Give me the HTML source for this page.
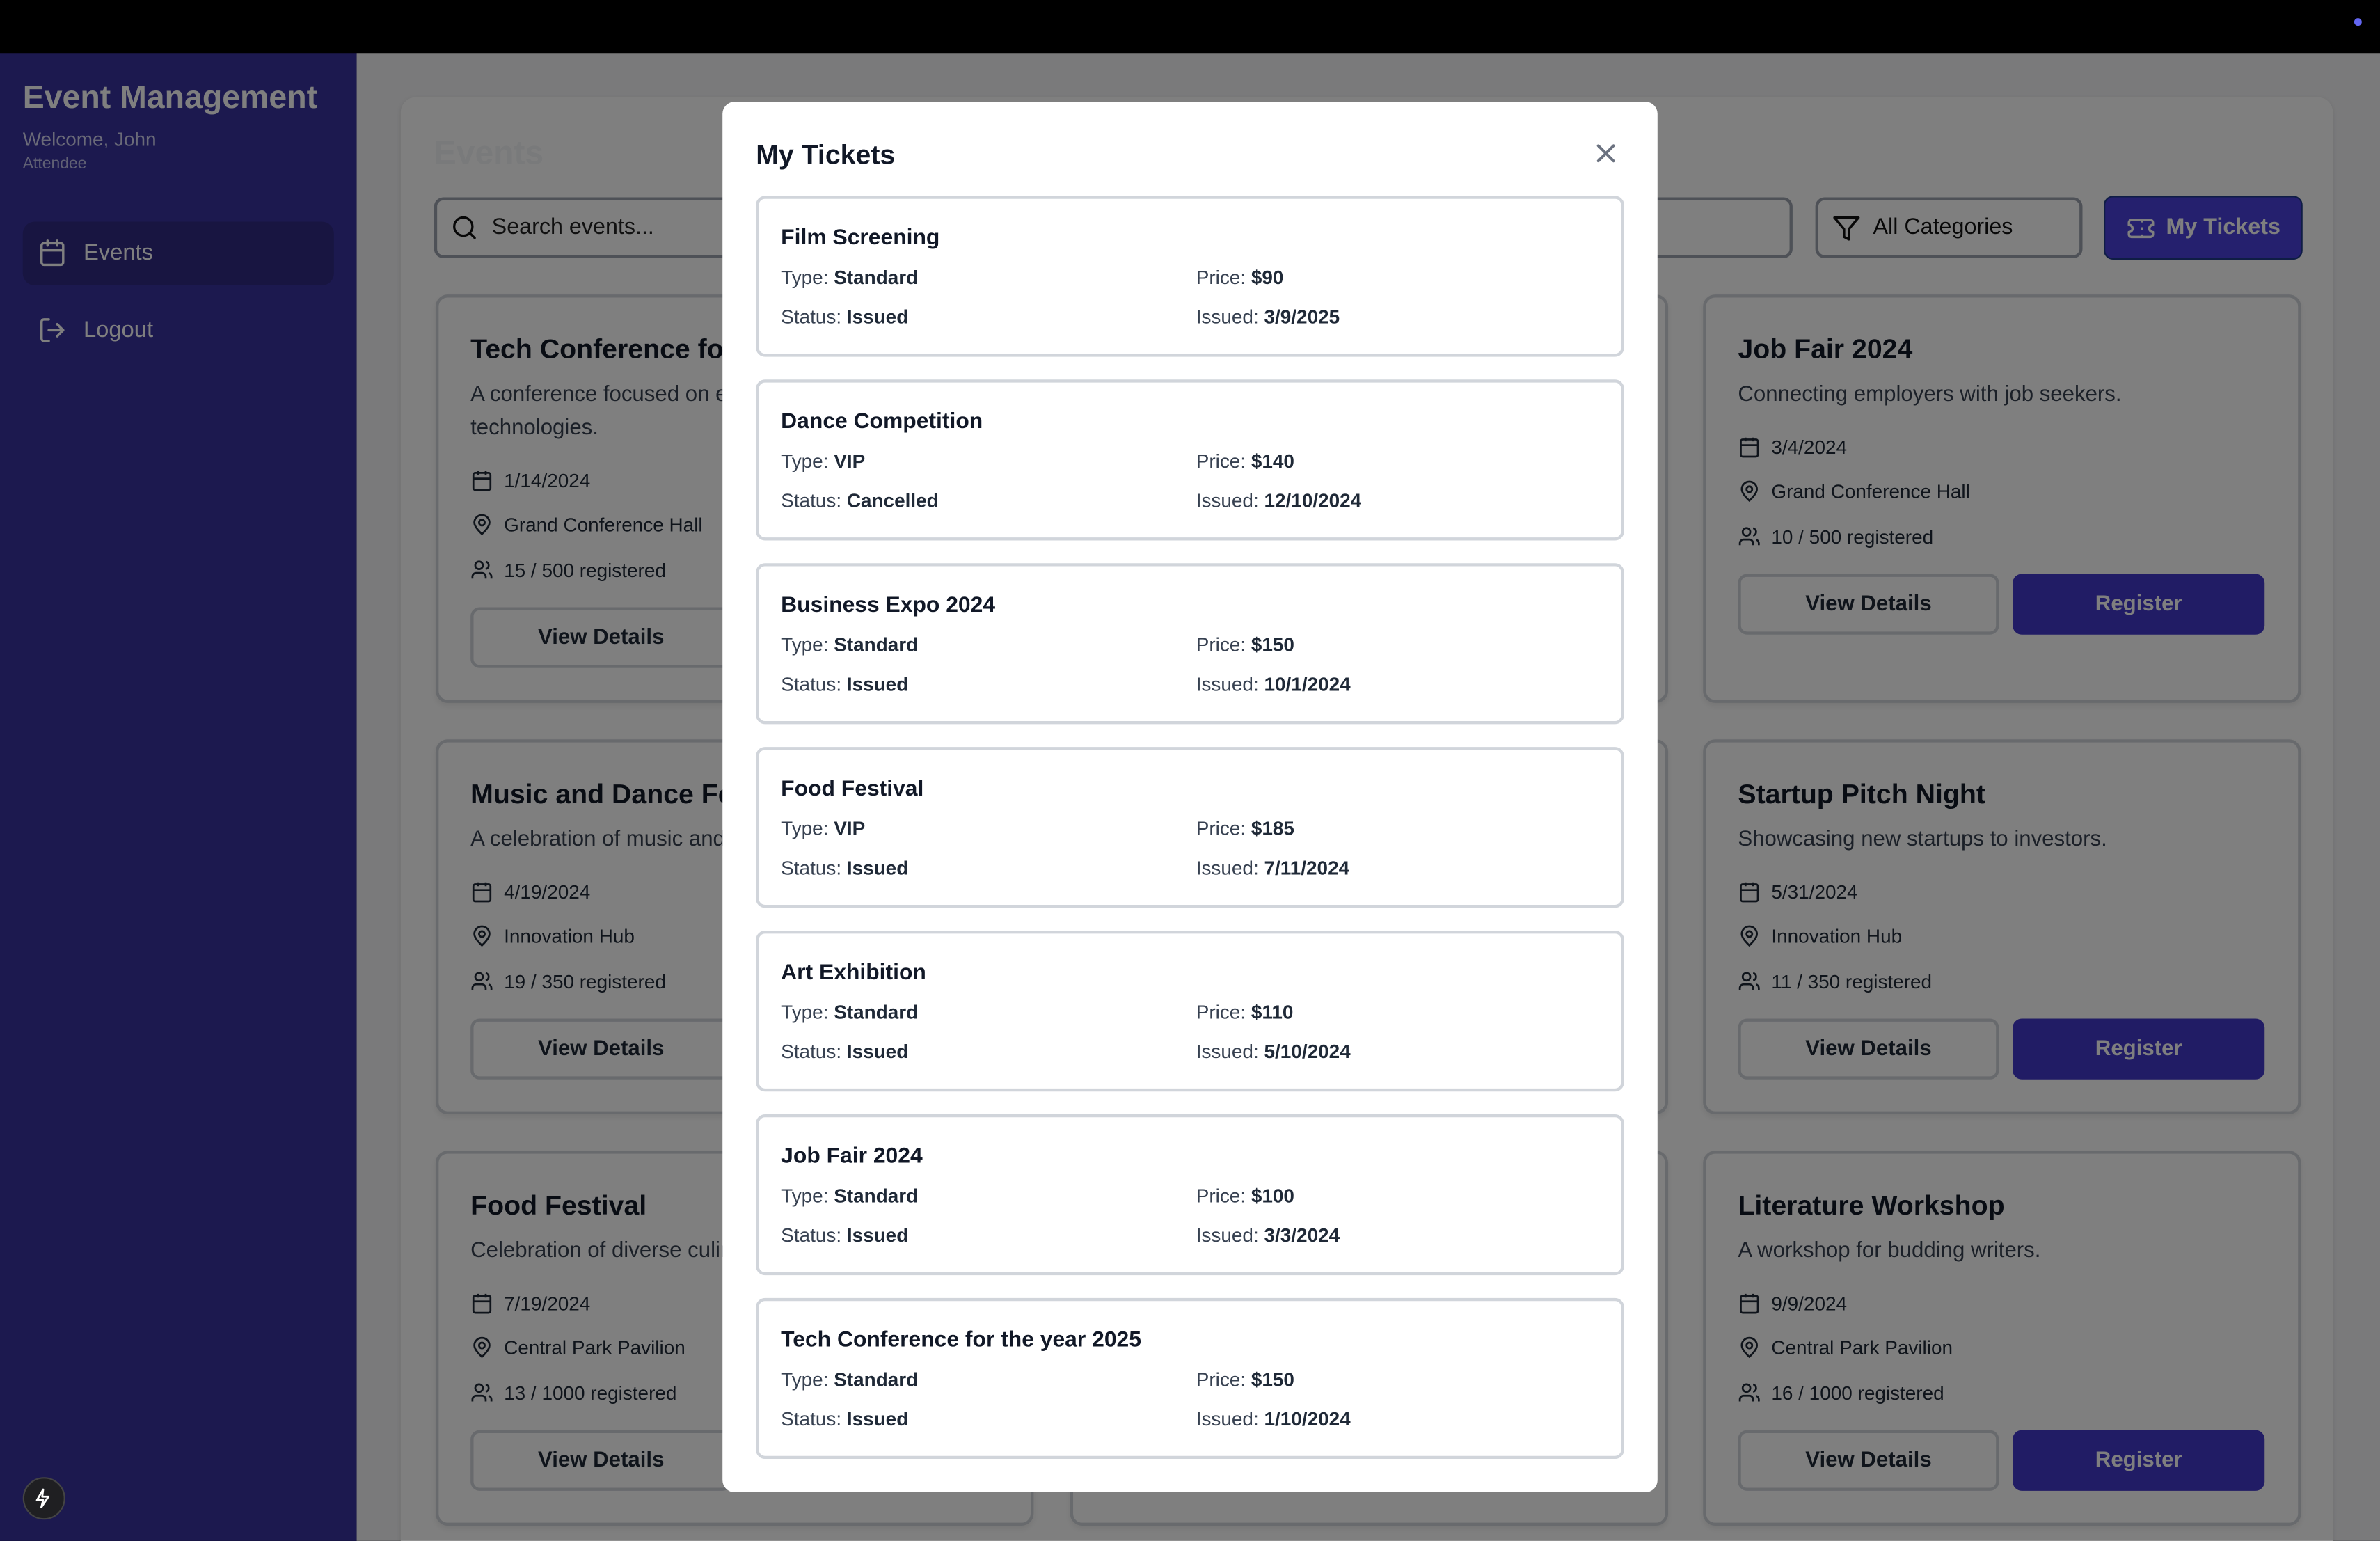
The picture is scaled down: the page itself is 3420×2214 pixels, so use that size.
<!DOCTYPE html>
<html><head><meta charset="utf-8"><style>
*{box-sizing:border-box;margin:0;padding:0}
html,body{width:3420px;height:2214px;overflow:hidden;background:#000;font-family:"Liberation Sans",sans-serif}
#s{position:absolute;left:0;top:0;width:1568px;height:1015px;transform:scale(2.18112);transform-origin:0 0;overflow:hidden}
.top{position:absolute;left:0;top:0;width:1568px;height:35.3px;background:#000}
.dot{position:absolute;left:1550.7px;top:11.8px;width:5.6px;height:5.6px;border-radius:50%;background:#6366f1}
.side{position:absolute;left:0;top:35.3px;width:235px;height:980px;background:#38329f;color:#fff}
.main{position:absolute;left:235px;top:35.3px;width:1333px;height:980px;background:#f4f4f6}
.panel{position:absolute;left:264px;top:64px;width:1273px;height:1000px;background:#fff;border-radius:10px;box-shadow:0 1px 3px rgba(0,0,0,.1)}
.card{position:absolute;width:394px;background:#fff;border:2px solid #d1d5db;border-radius:8px;padding:21px 22px 0 21px;box-shadow:0 2px 4px rgba(0,0,0,.08)}
.card h3{font-size:18px;line-height:26px;font-weight:700;color:#111827}
.card .d{margin-top:6px;font-size:14.3px;line-height:22px;color:#374151}
.card .m{margin-top:13px}
.card .r{height:20px;margin-bottom:9.5px;display:flex;align-items:center;font-size:12.8px;color:#1f2937}
.card .r svg{width:15px;height:15px;margin-right:7px;flex:none}
.btns{display:flex;gap:9px;position:absolute;left:21px;right:22px;top:182px}
.b{height:40px;border-radius:6px;display:flex;align-items:center;justify-content:center;font-weight:700;font-size:14.3px}
.vd{width:172px;border:2px solid #d1d5db;color:#1f2937}
.rg{flex:1;background:#4338ca;color:#fff}
.ov{position:absolute;left:0;top:35.3px;width:1568px;height:980px;background:rgba(0,0,0,.5)}
.modal{position:absolute;left:476px;top:66.5px;width:616px;height:916.5px;background:#fff;border-radius:8px;padding:0 22px}
.modal h2{position:absolute;left:22px;top:22px;font-size:18px;line-height:26px;color:#111827}
.t{position:absolute;left:22px;width:571.5px;height:105.5px;border:2px solid #d1d5db;border-radius:6px;padding:15px 0 0 14.5px}
.t h4{font-size:14.6px;line-height:22px;color:#111827}
.g{display:grid;grid-template-columns:273.5px 1fr;row-gap:8px;margin-top:6px;font-size:12.8px;line-height:18px;color:#374151}
.g b{color:#1f2937}
.bolt{position:absolute;left:14.5px;top:972.5px;width:28px;height:28px;border-radius:50%;background:#1f1f22;border:1px solid #444;display:flex;align-items:center;justify-content:center}
</style></head><body><div id="s">
<div class="top"><div class="dot"></div></div>
<div class="side">
 <div style="position:absolute;left:15px;top:17px;font-size:21.3px;font-weight:700;color:#fff">Event Management</div>
 <div style="position:absolute;left:15px;top:49px;font-size:12.8px;color:#d4d4f0">Welcome, John</div>
 <div style="position:absolute;left:15px;top:67px;font-size:10.5px;color:#c0c0e8">Attendee</div>
 <div style="position:absolute;left:15px;top:111px;width:205px;height:42px;border-radius:8px;background:#302b82"></div>
 <svg style="position:absolute;left:25px;top:122px" width="19" height="19" viewBox="0 0 24 24" fill="none" stroke="#fff" stroke-width="2" stroke-linecap="round"><rect x="3" y="4" width="18" height="18" rx="2"/><path d="M16 2v4M8 2v4M3 10h18"/></svg>
 <div style="position:absolute;left:55px;top:123px;font-size:15px;color:#fff">Events</div>
 <svg style="position:absolute;left:25px;top:173px" width="19" height="19" viewBox="0 0 24 24" fill="none" stroke="#fff" stroke-width="2" stroke-linecap="round" stroke-linejoin="round"><path d="M9 21H5a2 2 0 0 1-2-2V5a2 2 0 0 1 2-2h4M16 17l5-5-5-5M21 12H9"/></svg>
 <div style="position:absolute;left:55px;top:174px;font-size:15px;color:#fff">Logout</div>
</div>
<div class="main"></div>
<div class="panel">
 <div style="position:absolute;left:22px;top:24px;font-size:22px;font-weight:700;color:#f3f4f6">Events</div>
 <div style="position:absolute;left:22px;top:66px;width:895px;height:40px;border:2px solid #9ca3af;border-radius:6px"></div>
 <svg style="position:absolute;left:33px;top:77px" width="18" height="18" viewBox="0 0 24 24" fill="none" stroke="#111" stroke-width="2" stroke-linecap="round"><circle cx="11" cy="11" r="8"/><path d="m21 21-4.3-4.3"/></svg>
 <div style="position:absolute;left:60px;top:78px;font-size:14.8px;color:#222">Search events...</div>
 <div style="position:absolute;left:932px;top:66px;width:176px;height:40px;border:2px solid #9ca3af;border-radius:6px"></div>
 <svg style="position:absolute;left:943px;top:77px" width="19" height="19" viewBox="0 0 24 24" fill="none" stroke="#111" stroke-width="2" stroke-linejoin="round"><path d="M22 3H2l8 9.5V19l4 2v-8.5z"/></svg>
 <div style="position:absolute;left:970px;top:78px;font-size:14.8px;color:#111">All Categories</div>
 <div style="position:absolute;left:1122px;top:65px;width:131px;height:42px;border-radius:6px;background:#4a40dc;border:1px solid #1e3a8a"></div>
 <svg style="position:absolute;left:1137px;top:77px" width="19" height="19" viewBox="0 0 24 24" fill="none" stroke="#fff" stroke-width="2" stroke-linejoin="round"><path d="M2 9a3 3 0 0 1 0 6v2a2 2 0 0 0 2 2h16a2 2 0 0 0 2-2v-2a3 3 0 0 1 0-6V7a2 2 0 0 0-2-2H4a2 2 0 0 0-2 2z"/><path d="M13 5v2M13 17v2M13 11v2"/></svg>
 <div style="position:absolute;left:1163px;top:78px;font-size:14.8px;font-weight:700;color:#fff">My Tickets</div>
</div>

<!-- cards -->
<div class="card" style="left:287px;top:194px;height:269px"><h3>Tech Conference for the year 2025</h3><div class="d">A conference focused on emerging<br>technologies.</div><div class="m">
<div class="r"><svg viewBox="0 0 24 24" fill="none" stroke="#1f2937" stroke-width="2"><rect x="3" y="4" width="18" height="18" rx="2"/><path d="M16 2v4M8 2v4M3 10h18"/></svg>1/14/2024</div>
<div class="r"><svg viewBox="0 0 24 24" fill="none" stroke="#1f2937" stroke-width="2"><path d="M20 10c0 5-8 12-8 12s-8-7-8-12a8 8 0 0 1 16 0z"/><circle cx="12" cy="10" r="3"/></svg>Grand Conference Hall</div>
<div class="r"><svg viewBox="0 0 24 24" fill="none" stroke="#1f2937" stroke-width="2"><path d="M16 21v-2a4 4 0 0 0-4-4H6a4 4 0 0 0-4 4v2"/><circle cx="9" cy="7" r="4"/><path d="M22 21v-2a4 4 0 0 0-3-3.9M16 3.1a4 4 0 0 1 0 7.8"/></svg>15 / 500 registered</div></div>
<div class="btns" style="top:204px"><div class="b vd">View Details</div><div class="b rg">Register</div></div></div>

<div class="card" style="left:705px;top:194px;height:269px"></div>

<div class="card" style="left:1122px;top:194px;height:269px"><h3>Job Fair 2024</h3><div class="d">Connecting employers with job seekers.</div><div class="m">
<div class="r"><svg viewBox="0 0 24 24" fill="none" stroke="#1f2937" stroke-width="2"><rect x="3" y="4" width="18" height="18" rx="2"/><path d="M16 2v4M8 2v4M3 10h18"/></svg>3/4/2024</div>
<div class="r"><svg viewBox="0 0 24 24" fill="none" stroke="#1f2937" stroke-width="2"><path d="M20 10c0 5-8 12-8 12s-8-7-8-12a8 8 0 0 1 16 0z"/><circle cx="12" cy="10" r="3"/></svg>Grand Conference Hall</div>
<div class="r"><svg viewBox="0 0 24 24" fill="none" stroke="#1f2937" stroke-width="2"><path d="M16 21v-2a4 4 0 0 0-4-4H6a4 4 0 0 0-4 4v2"/><circle cx="9" cy="7" r="4"/><path d="M22 21v-2a4 4 0 0 0-3-3.9M16 3.1a4 4 0 0 1 0 7.8"/></svg>10 / 500 registered</div></div>
<div class="btns"><div class="b vd">View Details</div><div class="b rg">Register</div></div></div>

<div class="card" style="left:287px;top:487px;height:247px"><h3>Music and Dance Festival</h3><div class="d">A celebration of music and dance.</div><div class="m">
<div class="r"><svg viewBox="0 0 24 24" fill="none" stroke="#1f2937" stroke-width="2"><rect x="3" y="4" width="18" height="18" rx="2"/><path d="M16 2v4M8 2v4M3 10h18"/></svg>4/19/2024</div>
<div class="r"><svg viewBox="0 0 24 24" fill="none" stroke="#1f2937" stroke-width="2"><path d="M20 10c0 5-8 12-8 12s-8-7-8-12a8 8 0 0 1 16 0z"/><circle cx="12" cy="10" r="3"/></svg>Innovation Hub</div>
<div class="r"><svg viewBox="0 0 24 24" fill="none" stroke="#1f2937" stroke-width="2"><path d="M16 21v-2a4 4 0 0 0-4-4H6a4 4 0 0 0-4 4v2"/><circle cx="9" cy="7" r="4"/><path d="M22 21v-2a4 4 0 0 0-3-3.9M16 3.1a4 4 0 0 1 0 7.8"/></svg>19 / 350 registered</div></div>
<div class="btns"><div class="b vd">View Details</div><div class="b rg">Register</div></div></div>

<div class="card" style="left:705px;top:487px;height:247px"></div>

<div class="card" style="left:1122px;top:487px;height:247px"><h3>Startup Pitch Night</h3><div class="d">Showcasing new startups to investors.</div><div class="m">
<div class="r"><svg viewBox="0 0 24 24" fill="none" stroke="#1f2937" stroke-width="2"><rect x="3" y="4" width="18" height="18" rx="2"/><path d="M16 2v4M8 2v4M3 10h18"/></svg>5/31/2024</div>
<div class="r"><svg viewBox="0 0 24 24" fill="none" stroke="#1f2937" stroke-width="2"><path d="M20 10c0 5-8 12-8 12s-8-7-8-12a8 8 0 0 1 16 0z"/><circle cx="12" cy="10" r="3"/></svg>Innovation Hub</div>
<div class="r"><svg viewBox="0 0 24 24" fill="none" stroke="#1f2937" stroke-width="2"><path d="M16 21v-2a4 4 0 0 0-4-4H6a4 4 0 0 0-4 4v2"/><circle cx="9" cy="7" r="4"/><path d="M22 21v-2a4 4 0 0 0-3-3.9M16 3.1a4 4 0 0 1 0 7.8"/></svg>11 / 350 registered</div></div>
<div class="btns"><div class="b vd">View Details</div><div class="b rg">Register</div></div></div>

<div class="card" style="left:287px;top:758px;height:247px"><h3>Food Festival</h3><div class="d">Celebration of diverse culinary traditions.</div><div class="m">
<div class="r"><svg viewBox="0 0 24 24" fill="none" stroke="#1f2937" stroke-width="2"><rect x="3" y="4" width="18" height="18" rx="2"/><path d="M16 2v4M8 2v4M3 10h18"/></svg>7/19/2024</div>
<div class="r"><svg viewBox="0 0 24 24" fill="none" stroke="#1f2937" stroke-width="2"><path d="M20 10c0 5-8 12-8 12s-8-7-8-12a8 8 0 0 1 16 0z"/><circle cx="12" cy="10" r="3"/></svg>Central Park Pavilion</div>
<div class="r"><svg viewBox="0 0 24 24" fill="none" stroke="#1f2937" stroke-width="2"><path d="M16 21v-2a4 4 0 0 0-4-4H6a4 4 0 0 0-4 4v2"/><circle cx="9" cy="7" r="4"/><path d="M22 21v-2a4 4 0 0 0-3-3.9M16 3.1a4 4 0 0 1 0 7.8"/></svg>13 / 1000 registered</div></div>
<div class="btns"><div class="b vd">View Details</div><div class="b rg">Register</div></div></div>

<div class="card" style="left:705px;top:758px;height:247px"></div>

<div class="card" style="left:1122px;top:758px;height:247px"><h3>Literature Workshop</h3><div class="d">A workshop for budding writers.</div><div class="m">
<div class="r"><svg viewBox="0 0 24 24" fill="none" stroke="#1f2937" stroke-width="2"><rect x="3" y="4" width="18" height="18" rx="2"/><path d="M16 2v4M8 2v4M3 10h18"/></svg>9/9/2024</div>
<div class="r"><svg viewBox="0 0 24 24" fill="none" stroke="#1f2937" stroke-width="2"><path d="M20 10c0 5-8 12-8 12s-8-7-8-12a8 8 0 0 1 16 0z"/><circle cx="12" cy="10" r="3"/></svg>Central Park Pavilion</div>
<div class="r"><svg viewBox="0 0 24 24" fill="none" stroke="#1f2937" stroke-width="2"><path d="M16 21v-2a4 4 0 0 0-4-4H6a4 4 0 0 0-4 4v2"/><circle cx="9" cy="7" r="4"/><path d="M22 21v-2a4 4 0 0 0-3-3.9M16 3.1a4 4 0 0 1 0 7.8"/></svg>16 / 1000 registered</div></div>
<div class="btns"><div class="b vd">View Details</div><div class="b rg">Register</div></div></div>

<div class="ov"></div>

<div class="modal">
 <h2>My Tickets</h2>
 <svg style="position:absolute;left:572px;top:24.5px" width="20" height="20" viewBox="0 0 24 24" fill="none" stroke="#6b7280" stroke-width="2.2" stroke-linecap="round"><path d="M18 6 6 18M6 6l12 12"/></svg>
 <div class="t" style="top:62.5px"><h4>Film Screening</h4><div class="g"><span>Type: <b>Standard</b></span><span>Price: <b>$90</b></span><span>Status: <b>Issued</b></span><span>Issued: <b>3/9/2025</b></span></div></div>
 <div class="t" style="top:183.5px"><h4>Dance Competition</h4><div class="g"><span>Type: <b>VIP</b></span><span>Price: <b>$140</b></span><span>Status: <b>Cancelled</b></span><span>Issued: <b>12/10/2024</b></span></div></div>
 <div class="t" style="top:304.5px"><h4>Business Expo 2024</h4><div class="g"><span>Type: <b>Standard</b></span><span>Price: <b>$150</b></span><span>Status: <b>Issued</b></span><span>Issued: <b>10/1/2024</b></span></div></div>
 <div class="t" style="top:425.5px"><h4>Food Festival</h4><div class="g"><span>Type: <b>VIP</b></span><span>Price: <b>$185</b></span><span>Status: <b>Issued</b></span><span>Issued: <b>7/11/2024</b></span></div></div>
 <div class="t" style="top:546.5px"><h4>Art Exhibition</h4><div class="g"><span>Type: <b>Standard</b></span><span>Price: <b>$110</b></span><span>Status: <b>Issued</b></span><span>Issued: <b>5/10/2024</b></span></div></div>
 <div class="t" style="top:667.5px"><h4>Job Fair 2024</h4><div class="g"><span>Type: <b>Standard</b></span><span>Price: <b>$100</b></span><span>Status: <b>Issued</b></span><span>Issued: <b>3/3/2024</b></span></div></div>
 <div class="t" style="top:788.5px"><h4>Tech Conference for the year 2025</h4><div class="g"><span>Type: <b>Standard</b></span><span>Price: <b>$150</b></span><span>Status: <b>Issued</b></span><span>Issued: <b>1/10/2024</b></span></div></div>
</div>

<div class="bolt"><svg width="14" height="14" viewBox="0 0 24 24" fill="none" stroke="#fff" stroke-width="2.2" stroke-linejoin="round"><path d="M11 2 4 14h7l-2 8 8-12h-7z"/></svg></div>
</div></body></html>
